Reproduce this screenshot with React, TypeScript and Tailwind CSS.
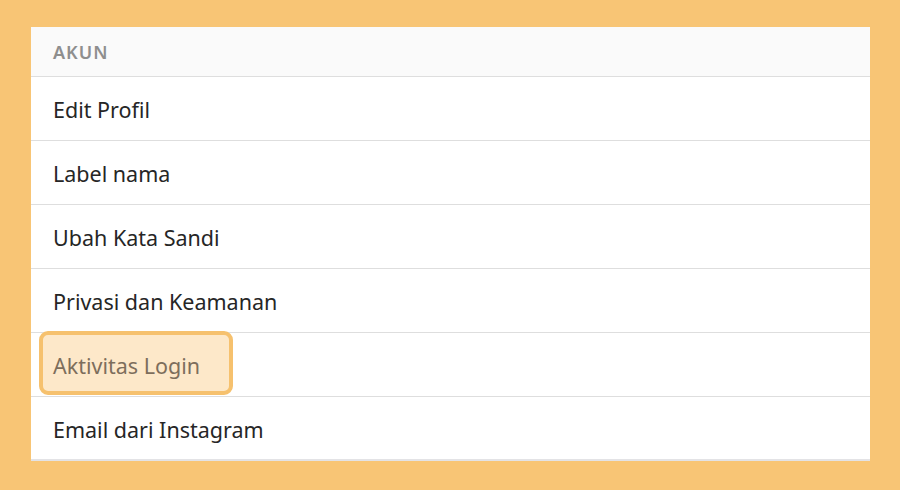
import React from 'react';

const App = () => {
  const items = [
    'Edit Profil',
    'Label nama',
    'Ubah Kata Sandi',
    'Privasi dan Keamanan',
    'Aktivitas Login',
    'Email dari Instagram',
  ];

  return (
    <div className="w-[900px] h-[490px] bg-[#f8c575] pt-[27px] pl-[31px] overflow-hidden" style={{ fontFamily: '"Noto Sans", "Open Sans", sans-serif' }}>
      <div className="w-[839px] bg-white">
        <div className="h-[50px] bg-[#fafafa] border-b border-[#dedede] flex items-center pl-[22px] pt-[1px]">
          <span className="text-[18px] font-semibold text-[#8e8e8e] tracking-[1px]">AKUN</span>
        </div>
        {items.map((item, index) => (
          <div
            key={index}
            className={`relative h-[64px] flex items-center pl-[22px] pt-[4px] ${index === items.length - 1 ? 'border-b-2 border-[#e3e3e6]' : 'border-b border-[#dedede]'}`}
          >
            {item === 'Aktivitas Login' && (
              <div className="absolute left-[8px] top-[-2px] w-[194px] h-[64px] rounded-[9px] border-[4px] border-[#f6c16e] bg-[#fde8c9]"></div>
            )}
            <span className={`relative text-[21.5px] ${item === 'Aktivitas Login' ? 'text-[#7d6e5c]' : 'text-[#262626]'}`}>
              {item}
            </span>
          </div>
        ))}
      </div>
    </div>
  );
};

export default App;
